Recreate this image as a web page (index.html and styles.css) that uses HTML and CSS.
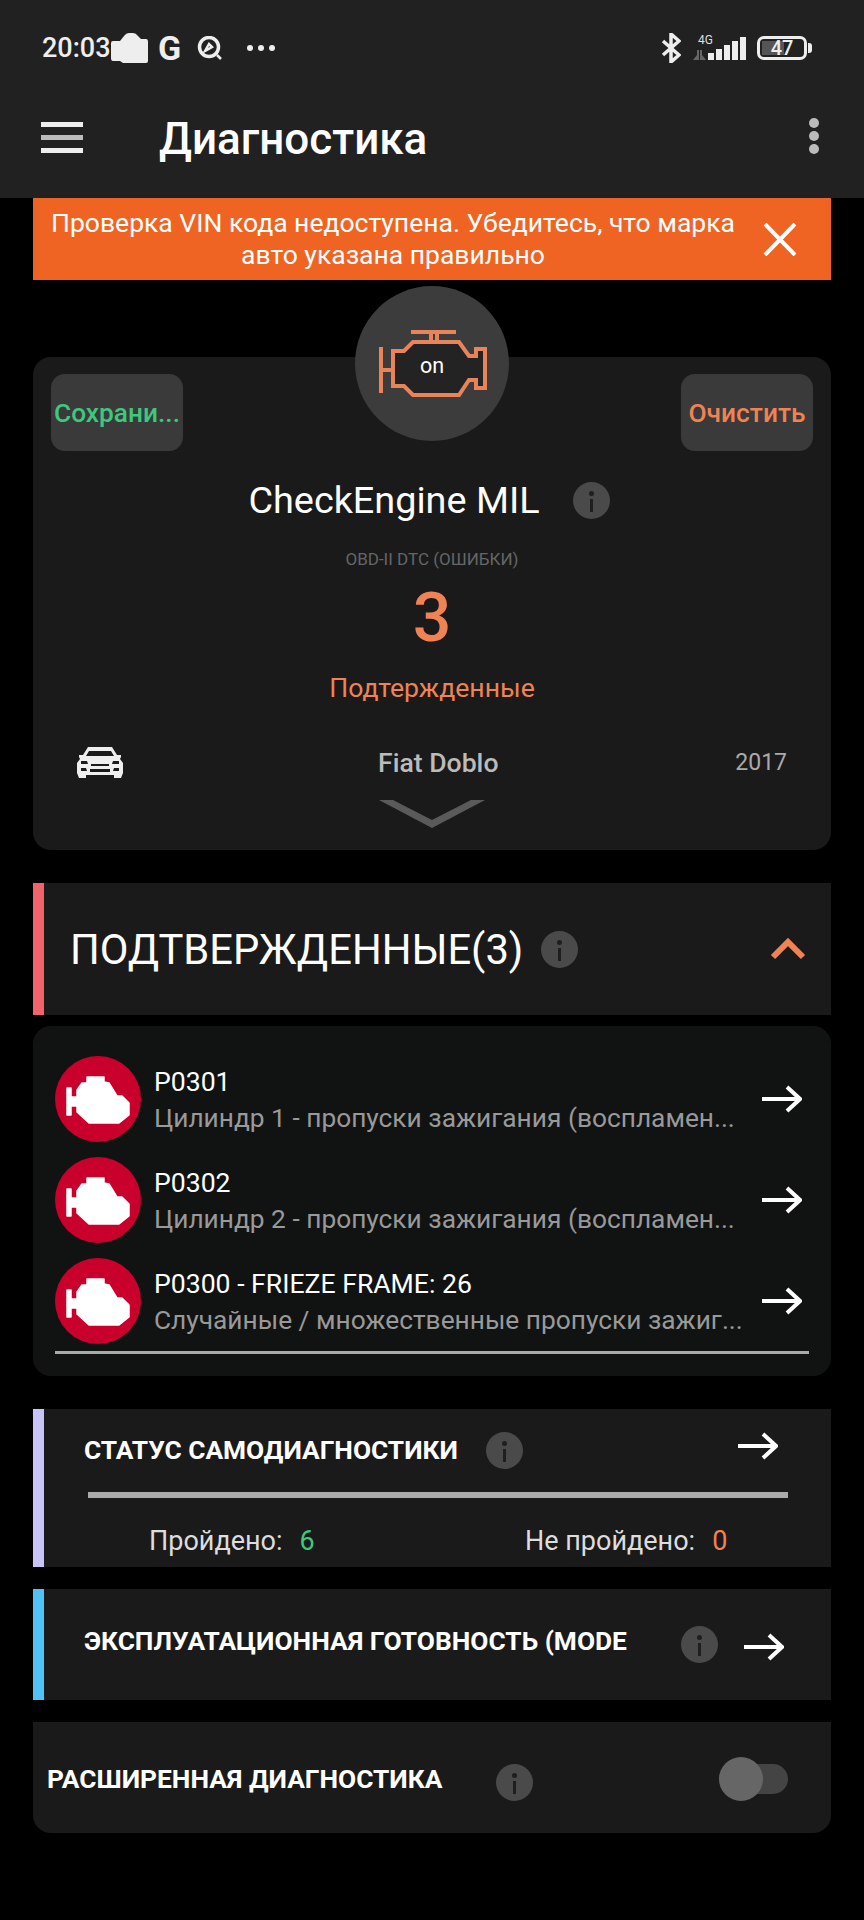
FILE: index.html
```html
<!DOCTYPE html>
<html lang="ru">
<head>
    <meta charset="UTF-8">
    <meta name="viewport" content="width=device-width, initial-scale=1.0">
    <title>Диагностика</title>
    <link rel="stylesheet" href="styles.css">
</head>
<body>
    <div class="top-bar">
        <div class="status-bar">
            <div class="status-left">
                <span class="clock">20:03</span>
                <svg class="cloud" width="37" height="30" viewBox="0 0 37 30"><path d="M2 8H9L13 3Q15 0 18 0H22Q25 0 27 3L30 6H35Q37 6 37 9V28Q37 30 35 30H12L9 28H2Q0 28 0 25V10Q0 8 2 8Z" fill="#eee"/></svg>
                <span class="g-letter">G</span>
                <svg width="26" height="24" viewBox="0 0 26 24"><circle cx="12" cy="11" r="9.5" fill="none" stroke="#eee" stroke-width="3.5"/><path d="M8 15l4-7 3 3-5 3zM20 19l4 4" fill="none" stroke="#eee" stroke-width="2.5"/></svg>
                <span class="more-dots"><i></i><i></i><i></i></span>
            </div>
            <div class="status-right">
                <svg width="20" height="30" viewBox="0 0 20 30"><path d="M2 8l16 14-8 7V1l8 7L2 22" fill="none" stroke="#eee" stroke-width="3.5"/></svg>
                <div class="signal">
                    <span class="net-label">4G</span>
                    <svg class="net-arrows" width="13" height="10" viewBox="0 0 13 10"><path d="M0 10L4 5V0h2v10zM7 0h2v5l4 5H7z" fill="#666"/></svg>
                    <i class="s1"></i><i class="s2"></i><i class="s3"></i><i class="s4"></i><i class="s5"></i>
                </div>
                <div class="battery"><span class="battery-fill"></span><span class="battery-text">47</span></div>
            </div>
        </div>
        <div class="app-bar">
            <div class="hamburger"><i></i><i></i><i></i></div>
            <div class="app-title">Диагностика</div>
            <div class="kebab"><i></i><i></i><i></i></div>
        </div>
    </div>

    <div class="page">
        <div class="banner">
            <div class="banner-text">Проверка VIN кода недоступена. Убедитесь, что марка авто указана правильно</div>
            <svg class="banner-close" width="34" height="33" viewBox="0 0 34 33"><path d="M2 1l30 31M32 1L2 32" stroke="#fff" stroke-width="4" fill="none"/></svg>
        </div>

        <div class="summary-card">
            <div class="mil-circle">
                <svg class="mil-engine" width="154" height="155" viewBox="354 286 154 155">
                    <path d="M392 351H403L412 342H458L468 356H475V349H484V388H475V380H468L458 395H412L403 386H392Z" fill="#232323" stroke="#e8845a" stroke-width="4"/>
                    <path d="M380 347V393M380 370H392M410 332H455M430 332V342M436 332V342" fill="none" stroke="#e8845a" stroke-width="4"/>
                </svg>
                <span class="mil-on">on</span>
            </div>
            <div class="card-buttons">
                <div class="card-btn green-text">Сохрани...</div>
                <div class="card-btn orange-text">Очистить</div>
            </div>
            <div class="mil-title-row">
                <span class="mil-title">CheckEngine MIL</span>
                <span class="info-icon"></span>
            </div>
            <div class="dtc-label">OBD-II DTC (ОШИБКИ)</div>
            <div class="dtc-count">3</div>
            <div class="dtc-state">Подтержденные</div>
            <div class="car-row">
                <svg class="car-icon" width="48" height="32" viewBox="0 0 48 32">
                    <path d="M12 1H36L41 9H45V11L44 13L47 17V27L45 32H38V29H10V32H3L1 27V17L4 13L3 11V9H7Z" fill="#eee"/>
                    <path d="M13 5H35L38 10H10ZM5 15H11L12 18H5ZM43 15H37L36 18H43ZM5 22H10L11 25H5ZM43 22H38L37 25H43ZM15 18H33V20H15ZM14 23H34V26H14Z" fill="#1a1a1a"/>
                </svg>
                <span class="car-name">Fiat Doblo</span>
                <span class="car-year">2017</span>
            </div>
            <svg class="card-chevron" width="106" height="28" viewBox="0 0 106 28"><path d="M0 0h14l39 20L92 0h14L53 28z" fill="#5a5a5a"/></svg>
        </div>

        <div class="section-head red-bar">
            <span class="section-title">ПОДТВЕРЖДЕННЫЕ(3)</span>
            <span class="info-icon"></span>
            <svg class="chevron-up" width="36" height="22" viewBox="0 0 36 22"><path d="M3 19L18 4l15 15" fill="none" stroke="#ef8354" stroke-width="6"/></svg>
        </div>

        <div class="code-list">
            <div class="code-row">
                <svg class="code-badge" width="86" height="86" viewBox="0 0 86 86">
                    <circle cx="43" cy="43" r="43" fill="#c9002b"/>
                    <path d="M32 21H49V26L54 27L62 40H67L74 47V59L64 67H34L22 56V50H16V59H12V32H16V41H22V34L27 27H32Z" fill="#fff" stroke="#fff" stroke-width="1.5" stroke-linejoin="round"/>
                </svg>
                <div class="code-text">
                    <div class="code-name">P0301</div>
                    <div class="code-desc">Цилиндр 1 - пропуски зажигания (воспламен...</div>
                </div>
                <svg class="arrow-icon" width="40" height="28" viewBox="0 0 40 28"><path d="M0 14H37M25 2L38 14L25 26" fill="none" stroke="#fff" stroke-width="4"/></svg>
            </div>
            <div class="code-row">
                <svg class="code-badge" width="86" height="86" viewBox="0 0 86 86">
                    <circle cx="43" cy="43" r="43" fill="#c9002b"/>
                    <path d="M32 21H49V26L54 27L62 40H67L74 47V59L64 67H34L22 56V50H16V59H12V32H16V41H22V34L27 27H32Z" fill="#fff" stroke="#fff" stroke-width="1.5" stroke-linejoin="round"/>
                </svg>
                <div class="code-text">
                    <div class="code-name">P0302</div>
                    <div class="code-desc">Цилиндр 2 - пропуски зажигания (воспламен...</div>
                </div>
                <svg class="arrow-icon" width="40" height="28" viewBox="0 0 40 28"><path d="M0 14H37M25 2L38 14L25 26" fill="none" stroke="#fff" stroke-width="4"/></svg>
            </div>
            <div class="code-row">
                <svg class="code-badge" width="86" height="86" viewBox="0 0 86 86">
                    <circle cx="43" cy="43" r="43" fill="#c9002b"/>
                    <path d="M32 21H49V26L54 27L62 40H67L74 47V59L64 67H34L22 56V50H16V59H12V32H16V41H22V34L27 27H32Z" fill="#fff" stroke="#fff" stroke-width="1.5" stroke-linejoin="round"/>
                </svg>
                <div class="code-text">
                    <div class="code-name">P0300 - FRIEZE FRAME: 26</div>
                    <div class="code-desc">Случайные / множественные пропуски зажиг...</div>
                </div>
                <svg class="arrow-icon" width="40" height="28" viewBox="0 0 40 28"><path d="M0 14H37M25 2L38 14L25 26" fill="none" stroke="#fff" stroke-width="4"/></svg>
            </div>
            <div class="list-divider"></div>
        </div>

        <div class="status-card violet-bar">
            <div class="status-head">
                <span class="bold-title">СТАТУС САМОДИАГНОСТИКИ</span>
                <span class="info-icon"></span>
                <svg class="arrow-icon push-right" width="40" height="28" viewBox="0 0 40 28"><path d="M0 14H37M25 2L38 14L25 26" fill="none" stroke="#fff" stroke-width="4"/></svg>
            </div>
            <div class="status-line"></div>
            <div class="status-counts">
                <span class="count-item passed">Пройдено:<b class="green-text">6</b></span>
                <span class="count-item failed">Не пройдено:<b class="orange-text">0</b></span>
            </div>
        </div>

        <div class="ready-card blue-bar">
            <span class="bold-title ready-title">ЭКСПЛУАТАЦИОННАЯ ГОТОВНОСТЬ (MODE</span>
            <span class="info-icon"></span>
            <svg class="arrow-icon" width="40" height="28" viewBox="0 0 40 28"><path d="M0 14H37M25 2L38 14L25 26" fill="none" stroke="#fff" stroke-width="4"/></svg>
        </div>

        <div class="advanced-card">
            <span class="bold-title">РАСШИРЕННАЯ ДИАГНОСТИКА</span>
            <span class="info-icon"></span>
            <div class="toggle"><span class="toggle-thumb"></span></div>
        </div>
    </div>
</body>
</html>
```

FILE: styles.css
```css
* {
    box-sizing: border-box;
}
body {
    margin: 0;
    height: 1920px;
    overflow: hidden;
    background-color: #000;
    color: #fff;
    font-family: 'Roboto', 'Liberation Sans', sans-serif;
}
i {
    display: block;
}
.top-bar {
    height: 198px;
    background-color: #212121;
}
.status-bar {
    display: flex;
    justify-content: space-between;
    align-items: center;
    height: 96px;
    padding: 0 57px 0 42px;
}
.status-left {
    display: flex;
    align-items: center;
}
.clock {
    width: 68px;
    font-size: 27px;
    font-weight: 500;
    color: #eee;
}
.cloud {
    margin-left: 1px;
}
.g-letter {
    width: 25px;
    margin: 0 15px 0 9px;
    font-size: 34px;
    font-weight: 700;
    color: #eee;
    text-align: center;
}
.more-dots {
    display: flex;
    gap: 5px;
    margin-left: 24px;
}
.more-dots i {
    width: 6px;
    height: 6px;
    border-radius: 50%;
    background-color: #eee;
}
.status-right {
    display: flex;
    align-items: center;
}
.signal {
    position: relative;
    display: flex;
    align-items: flex-end;
    gap: 2px;
    width: 53px;
    height: 24px;
    margin: 0 11px 0 12px;
    padding-left: 15px;
}
.signal i {
    width: 6px;
    background-color: #eee;
}
.s1 { height: 7px; }
.s2 { height: 11px; }
.s3 { height: 15px; }
.s4 { height: 19px; }
.s5 { height: 23px; }
.net-label {
    position: absolute;
    left: 5px;
    top: -3px;
    font-size: 12px;
    color: #ddd;
}
.net-arrows {
    position: absolute;
    left: 0;
    bottom: 0;
}
.battery {
    position: relative;
    display: flex;
    align-items: center;
    justify-content: center;
    width: 50px;
    height: 24px;
    border: 3px solid #eee;
    border-radius: 7px;
}
.battery::after {
    content: "";
    position: absolute;
    right: -8px;
    top: 4px;
    width: 4px;
    height: 10px;
    border-radius: 0 3px 3px 0;
    background-color: #eee;
}
.battery-fill {
    position: absolute;
    left: 2px;
    top: 2px;
    bottom: 2px;
    width: 50%;
    background-color: #555;
}
.battery-text {
    position: relative;
    font-size: 20px;
    font-weight: 500;
    color: #eee;
}
.app-bar {
    display: flex;
    align-items: center;
    height: 86px;
    padding: 0 41px;
}
.hamburger {
    display: flex;
    flex-direction: column;
    gap: 8px;
    width: 42px;
    margin-top: -4px;
}
.hamburger i {
    height: 5px;
    background-color: #eee;
}
.hamburger i:nth-child(2) {
    background-color: #bbb;
}
.app-title {
    margin-left: 76px;
    font-size: 44px;
    font-weight: 500;
}
.kebab {
    display: flex;
    flex-direction: column;
    gap: 3px;
    margin-left: auto;
    margin-right: 4px;
    margin-top: -6px;
}
.kebab i {
    width: 10px;
    height: 10px;
    border-radius: 50%;
    background-color: #bbb;
}
.page {
    padding: 0 33px;
}
.banner {
    display: flex;
    align-items: center;
    height: 82px;
    padding: 0 34px 0 10px;
    background-color: #f06423;
}
.banner-text {
    width: 700px;
    font-size: 26.5px;
    line-height: 32px;
    text-align: center;
}
.banner-close {
    margin-left: auto;
}
.summary-card {
    position: relative;
    height: 493px;
    margin-top: 77px;
    padding: 17px 18px 0;
    border-radius: 18px;
    background-color: #1a1a1a;
}
.mil-circle {
    position: absolute;
    left: 322px;
    top: -71px;
    display: flex;
    align-items: center;
    justify-content: center;
    width: 154px;
    height: 155px;
    border-radius: 50%;
    background-color: #3c3c3c;
}
.mil-engine {
    position: absolute;
    left: 0;
    top: 0;
}
.mil-on {
    position: relative;
    margin-top: 3px;
    font-size: 21.5px;
}
.card-buttons {
    display: flex;
    justify-content: space-between;
}
.card-btn {
    display: flex;
    align-items: center;
    justify-content: center;
    width: 132px;
    height: 77px;
    border-radius: 14px;
    background-color: #3a3a3a;
    font-size: 26.3px;
    font-weight: 500;
    white-space: nowrap;
}
.green-text {
    color: #3ec77e;
}
.orange-text {
    color: #ef8354;
}
.mil-title-row {
    display: flex;
    align-items: center;
    justify-content: center;
    gap: 33px;
    margin-top: 27px;
    padding-right: 6px;
}
.mil-title {
    font-size: 37.8px;
}
.info-icon {
    position: relative;
    flex: none;
    width: 37px;
    height: 37px;
    border-radius: 50%;
    background-color: #4a4a4a;
}
.info-icon::before {
    content: "";
    position: absolute;
    left: 17px;
    top: 17px;
    width: 3px;
    height: 13px;
    background-color: #1f1f1f;
}
.info-icon::after {
    content: "";
    position: absolute;
    left: 16px;
    top: 9px;
    width: 5px;
    height: 5px;
    border-radius: 50%;
    background-color: #1f1f1f;
}
.dtc-label {
    margin-top: 27px;
    font-size: 17px;
    color: #666;
    text-align: center;
}
.dtc-count {
    margin-top: 9px;
    font-size: 68px;
    line-height: 80px;
    font-weight: 500;
    color: #ef8354;
    text-align: center;
}
.dtc-state {
    margin-top: 14px;
    font-size: 26.6px;
    color: #ef8354;
    text-align: center;
}
.car-row {
    position: relative;
    display: flex;
    align-items: center;
    justify-content: space-between;
    height: 34px;
    margin-top: 42px;
    padding: 0 26px 0 25px;
}
.car-name {
    position: absolute;
    left: 327px;
    font-size: 26.6px;
    font-weight: 500;
    color: #bbb;
}
.car-year {
    font-size: 23px;
    color: #aaa;
}
.card-chevron {
    display: block;
    margin: 21px auto 0;
}
.section-head {
    display: flex;
    align-items: center;
    height: 132px;
    margin-top: 33px;
    padding: 0 25px 0 26px;
    background-color: #1a1a1a;
}
.red-bar {
    border-left: 11px solid #f2646b;
}
.violet-bar {
    border-left: 11px solid #c8c4f8;
}
.blue-bar {
    border-left: 11px solid #4fc3f7;
}
.section-title {
    font-size: 41.7px;
    margin-right: 18px;
}
.chevron-up {
    margin-left: auto;
}
.code-list {
    height: 350px;
    margin-top: 11px;
    padding: 30px 22px 0;
    border-radius: 18px;
    background-color: #111313;
}
.code-row {
    display: flex;
    align-items: center;
    height: 86px;
    margin-bottom: 15px;
}
.code-text {
    flex: 1;
    min-width: 0;
    margin-left: 13px;
}
.code-name {
    font-size: 26.6px;
    line-height: 34px;
}
.code-desc {
    margin-top: 3px;
    font-size: 26.3px;
    line-height: 32px;
    color: #999;
    white-space: nowrap;
}
.arrow-icon {
    flex: none;
    margin-right: 7px;
}
.list-divider {
    height: 3px;
    margin-top: -8px;
    background-color: #aaa;
}
.bold-title {
    font-size: 26.3px;
    font-weight: 700;
    white-space: nowrap;
}
.status-card {
    height: 158px;
    margin-top: 33px;
    padding: 22px 43px 0 40px;
    background-color: #1a1a1a;
}
.status-head {
    display: flex;
    align-items: center;
    height: 38px;
    gap: 28px;
}
.push-right {
    margin-left: auto;
    margin-right: 10px;
    margin-top: -8px;
}
.status-line {
    height: 6px;
    margin: 23px 0 0 4px;
    background-color: #aaa;
}
.status-counts {
    display: flex;
    margin-top: 27px;
    font-size: 27px;
    color: #ddd;
}
.count-item b {
    margin-left: 17px;
    font-weight: 400;
}
.passed {
    width: 376px;
    margin-left: 65px;
}
.ready-card {
    display: flex;
    align-items: center;
    height: 111px;
    margin-top: 22px;
    padding: 0 39px 0 40px;
    background-color: #1a1a1a;
}
.ready-title {
    width: 597px;
    margin-top: -7px;
}
.ready-card .arrow-icon {
    margin: 4px 0 0 26px;
}
.advanced-card {
    display: flex;
    align-items: center;
    height: 111px;
    margin-top: 22px;
    padding: 3px 43px 0 14px;
    border-radius: 0 0 18px 18px;
    background-color: #1a1a1a;
}
.advanced-card .bold-title {
    width: 449px;
}
.advanced-card .info-icon {
    margin-top: 6px;
}
.toggle {
    position: relative;
    width: 69px;
    height: 30px;
    margin-left: auto;
    border-radius: 15px;
    background-color: #444;
}
.toggle-thumb {
    position: absolute;
    left: 0;
    top: -7px;
    width: 44px;
    height: 44px;
    border-radius: 50%;
    background-color: #666;
}
```
